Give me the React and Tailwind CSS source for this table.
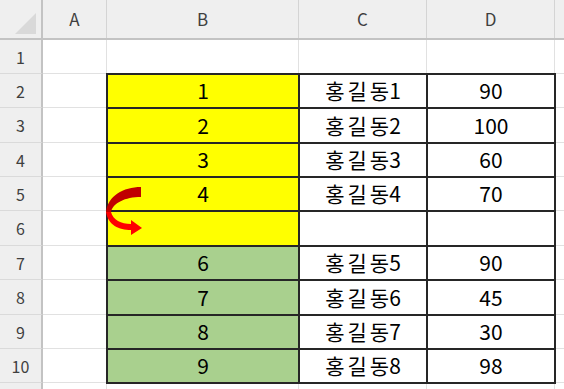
import React from 'react';

const rowHeights = [34, 34, 35, 34, 34, 35, 34, 35, 34, 34];

const data = [
  { b: '1', c: '1', d: '90', fill: 'bg-[#ffff00]' },
  { b: '2', c: '2', d: '100', fill: 'bg-[#ffff00]' },
  { b: '3', c: '3', d: '60', fill: 'bg-[#ffff00]' },
  { b: '4', c: '4', d: '70', fill: 'bg-[#ffff00]' },
  { b: '', c: '', d: '', fill: 'bg-[#ffff00]' },
  { b: '6', c: '5', d: '90', fill: 'bg-[#a9d08e]' },
  { b: '7', c: '6', d: '45', fill: 'bg-[#a9d08e]' },
  { b: '8', c: '7', d: '30', fill: 'bg-[#a9d08e]' },
  { b: '9', c: '8', d: '98', fill: 'bg-[#a9d08e]' },
];

const font = { fontFamily: '"Noto Sans CJK KR", "Noto Sans", sans-serif' };

function ColHead({ label, w }) {
  return (
    <div className={`${w} h-full flex items-center justify-center border-r border-[#d4d4d4] text-[17px] text-[#3f3f3f]`}>
      {label}
    </div>
  );
}

export default function App() {
  return (
    <div className="relative w-[564px] h-[389px] bg-white overflow-hidden text-black" style={font}>
      {/* column headers */}
      <div className="flex h-[40px] bg-[#efefef] border-b-2 border-[#c3c3c3]">
        <div className="w-[43px] h-full flex items-end justify-end pr-[5px] pb-[4px] border-r-2 border-[#c3c3c3]">
          <svg width="21" height="21" viewBox="0 0 21 21">
            <polygon points="21,0 21,21 0,21" fill="#d9d9d9" />
          </svg>
        </div>
        <ColHead label="A" w="w-[64px]" />
        <ColHead label="B" w="w-[192px]" />
        <ColHead label="C" w="w-[128px]" />
        <ColHead label="D" w="w-[128px]" />
        <div className="flex-1" />
      </div>

      {/* body grid */}
      <div className="grid grid-cols-[43px_64px_192px_128px_128px_1fr] grid-rows-[34px_34px_35px_34px_34px_35px_34px_35px_34px_34px_1fr]">
        {rowHeights.map((h, i) => (
          <React.Fragment key={i}>
            <div
              className="col-start-1 flex items-center justify-center bg-[#efefef] border-b border-[#dadada] border-r-2 border-r-[#c3c3c3] text-[16px] text-[#3f3f3f]"
              style={{ gridRowStart: i + 1 }}
            >
              {i + 1}
            </div>
            <div className="col-start-2 border-r border-b border-[#e1e1e1]" style={{ gridRowStart: i + 1 }} />
            {i === 0 && (
              <>
                <div className="col-start-3 row-start-1 border-r border-b border-[#e1e1e1]" />
                <div className="col-start-4 row-start-1 border-r border-b border-[#e1e1e1]" />
                <div className="col-start-5 row-start-1 border-r border-b border-[#e1e1e1]" />
              </>
            )}
            <div className="col-start-6 border-b border-[#e1e1e1]" style={{ gridRowStart: i + 1 }} />
          </React.Fragment>
        ))}
        <div className="col-start-1 row-start-11 h-[6px] bg-[#efefef] border-r-2 border-[#c3c3c3]" />
        <div className="col-start-2 row-start-11 h-[6px] border-r border-[#e1e1e1]" />
        <div className="col-start-3 row-start-11 h-[6px] border-r border-[#e1e1e1]" />
        <div className="col-start-4 row-start-11 h-[6px] border-r border-[#e1e1e1]" />
        <div className="col-start-5 row-start-11 h-[6px] border-r border-[#e1e1e1]" />

        {/* bordered table B2:D10 */}
        <div className="col-start-3 col-span-3 row-start-2 row-span-9 ml-[-1px] mt-[-1px] grid grid-cols-[192px_128px_128px] grid-rows-[34px_35px_34px_34px_35px_34px_35px_34px_34px] border-l-2 border-t-2 border-[#262626] w-[450px] h-[311px]">
          {data.map((r, i) => (
            <React.Fragment key={i}>
              <div className={`${r.fill} border-r-2 border-b-2 border-[#262626] flex items-center justify-center text-[21px]`}>{r.b}</div>
              <div className="bg-white border-r-2 border-b-2 border-[#262626] flex items-center justify-center text-[21px]">
                {r.c && (
                  <span>
                    <span className="tracking-[3px]">홍길</span>
                    동{r.c}
                  </span>
                )}
              </div>
              <div className="bg-white border-r-2 border-b-2 border-[#262626] flex items-center justify-center text-[21px]">{r.d}</div>
            </React.Fragment>
          ))}
        </div>
      </div>

      {/* curved arrow overlay */}
      <svg className="absolute left-0 top-0 pointer-events-none" width="564" height="389">
        <path d="M141 187 C123 187 108 196 106 212 L111 212 C113 203 125 197 141 197 Z" fill="#c00000" />
        <path d="M106 212 C108 225 119 230 131 230 L131 235 L142 228 L131 220 L131 224 C121 224 113 220 111 212 Z" fill="#ff0000" />
      </svg>
    </div>
  );
}
